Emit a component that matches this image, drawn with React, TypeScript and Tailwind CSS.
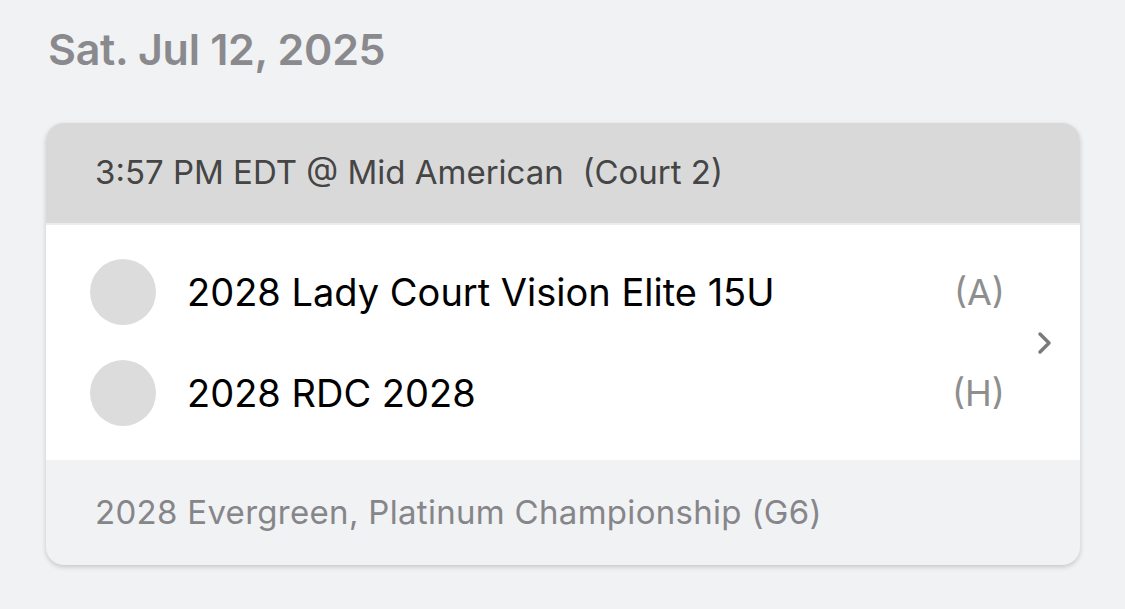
export default function App() {
  const teams = [
    { name: "2028 Lady Court Vision Elite 15U", side: "(A)" },
    { name: "2028 RDC 2028", side: "(H)" },
  ];

  return (
    <div className="min-h-screen w-full bg-[#f1f2f4] px-[46px] pt-[23px] font-['Inter',sans-serif]">
      <h1 className="pl-[2px] text-[43px] leading-[52px] font-semibold tracking-[-0.3px] text-[#8a8a8e]">
        Sat. Jul 12, 2025
      </h1>

      <div className="mt-[48px] w-[1034px] overflow-hidden rounded-[18px] bg-[#f1f2f4] shadow-[0_2px_5px_rgba(0,0,0,0.18)]">
        {/* header */}
        <div className="flex h-[102px] items-center border-b-2 border-[#ececec] bg-[#d9d9d9] px-[49px]">
          <span className="text-[33px] text-[#454545] whitespace-pre">
            3:57 PM EDT @ Mid American  (Court 2)
          </span>
        </div>

        {/* teams */}
        <div className="flex h-[235px] items-center bg-white pr-[26px]">
          <div className="flex flex-1 flex-col gap-[35px] pl-[44px] pr-[31px]">
            {teams.map((team) => (
              <div key={team.name} className="flex items-center">
                <div className="h-[66px] w-[66px] shrink-0 rounded-full bg-[#dcdcdc]" />
                <span className="ml-[31px] flex-1 text-[38px] text-black">{team.name}</span>
                <span className="text-[36px] text-[#8e8e8e]">{team.side}</span>
              </div>
            ))}
          </div>
          <svg width="18" height="26" viewBox="0 0 18 26" className="shrink-0">
            <path d="M4 4 L13 13 L4 22" fill="none" stroke="#7a7a7a" strokeWidth="3.5" strokeLinecap="round" strokeLinejoin="round" />
          </svg>
        </div>

        {/* footer */}
        <div className="flex h-[105px] items-center px-[49px]">
          <span className="text-[33px] tracking-[0.3px] text-[#86868a]">2028 Evergreen, Platinum Championship (G6)</span>
        </div>
      </div>
    </div>
  );
}
